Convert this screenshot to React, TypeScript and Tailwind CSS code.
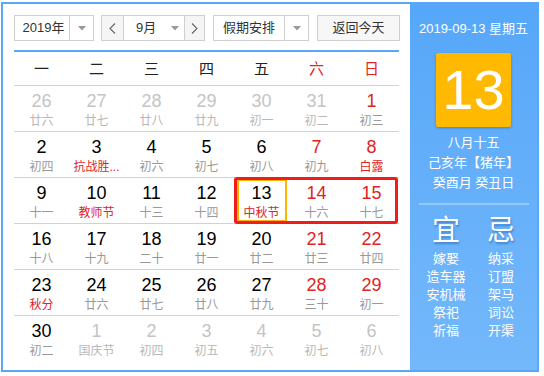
import React from "react";

type Day = { n: number; l: string; other?: boolean; hl?: boolean };

const rows: Day[][] = [
  [
    { n: 26, l: "廿六", other: true },
    { n: 27, l: "廿七", other: true },
    { n: 28, l: "廿八", other: true },
    { n: 29, l: "廿九", other: true },
    { n: 30, l: "初一", other: true },
    { n: 31, l: "初二", other: true },
    { n: 1, l: "初三" },
  ],
  [
    { n: 2, l: "初四" },
    { n: 3, l: "抗战胜...", hl: true },
    { n: 4, l: "初六" },
    { n: 5, l: "初七" },
    { n: 6, l: "初八" },
    { n: 7, l: "初九" },
    { n: 8, l: "白露", hl: true },
  ],
  [
    { n: 9, l: "十一" },
    { n: 10, l: "教师节", hl: true },
    { n: 11, l: "十三" },
    { n: 12, l: "十四" },
    { n: 13, l: "中秋节", hl: true },
    { n: 14, l: "十六" },
    { n: 15, l: "十七" },
  ],
  [
    { n: 16, l: "十八" },
    { n: 17, l: "十九" },
    { n: 18, l: "二十" },
    { n: 19, l: "廿一" },
    { n: 20, l: "廿二" },
    { n: 21, l: "廿三" },
    { n: 22, l: "廿四" },
  ],
  [
    { n: 23, l: "秋分", hl: true },
    { n: 24, l: "廿六" },
    { n: 25, l: "廿七" },
    { n: 26, l: "廿八" },
    { n: 27, l: "廿九" },
    { n: 28, l: "三十" },
    { n: 29, l: "初一" },
  ],
  [
    { n: 30, l: "初二" },
    { n: 1, l: "国庆节", other: true },
    { n: 2, l: "初四", other: true },
    { n: 3, l: "初五", other: true },
    { n: 4, l: "初六", other: true },
    { n: 5, l: "初七", other: true },
    { n: 6, l: "初八", other: true },
  ],
];

const weekdays = ["一", "二", "三", "四", "五", "六", "日"];
const yi = ["嫁娶", "造车器", "安机械", "祭祀", "祈福"];
const ji = ["纳采", "订盟", "架马", "词讼", "开渠"];

function Tri() {
  return (
    <svg width="8" height="5" viewBox="0 0 8 5">
      <path d="M0 0 L8 0 L4 4.5 Z" fill="#999" />
    </svg>
  );
}

function Chevron({ dir }: { dir: "l" | "r" }) {
  return (
    <svg width="7" height="11" viewBox="0 0 7 11">
      <polyline
        points={dir === "l" ? "6,0.5 1,5.5 6,10.5" : "1,0.5 6,5.5 1,10.5"}
        fill="none"
        stroke="#666"
        strokeWidth="1.1"
      />
    </svg>
  );
}

export default function App() {
  return (
    <div className="w-[544px] h-[376px] bg-white pt-[2px] pl-[1px] font-['Liberation_Sans','Noto_Sans_CJK_SC',sans-serif]">
      <div className="w-[538px] h-[370px] border-2 border-[#5aa7f8] flex">
        {/* Left */}
        <div className="w-[407px] pl-[11px] pt-[11px]">
          {/* controls */}
          <div className="flex h-[26px] text-[13px] text-[#333]">
            <div className="w-[80px] h-[26px] border border-[#cfcfcf] flex">
              <div className="w-[55px] flex items-center justify-center pl-[3px] border-r border-[#cfcfcf]">2019年</div>
              <div className="flex-1 flex items-center justify-center">
                <Tri />
              </div>
            </div>
            <div className="ml-[7px] w-[104px] h-[26px] border border-[#cfcfcf] flex">
              <div className="w-[22px] bg-[#f5f5f5] border-r border-[#cfcfcf] flex items-center justify-center">
                <Chevron dir="l" />
              </div>
              <div className="w-[60px] flex items-center pl-[12px]">
                <span>9月</span>
                <span className="ml-[15px] flex">
                  <Tri />
                </span>
              </div>
              <div className="flex-1 bg-[#f5f5f5] border-l border-[#cfcfcf] flex items-center justify-center">
                <Chevron dir="r" />
              </div>
            </div>
            <div className="ml-[8px] w-[96px] h-[26px] border border-[#cfcfcf] flex">
              <div className="w-[71px] flex items-center justify-center border-r border-[#cfcfcf]">假期安排</div>
              <div className="flex-1 flex items-center justify-center">
                <Tri />
              </div>
            </div>
            <div className="ml-[8px] w-[83px] h-[26px] border border-[#cfcfcf] bg-[#f7f7f7] flex items-center justify-center">
              返回今天
            </div>
          </div>
          <div className="mt-[9px] w-[385px] h-[2px] bg-[#5aa7f8]" />
          {/* grid */}
          <div className="w-[385px]">
            <div className="grid grid-cols-7 h-[34px] border-b border-[#d2d2d2] items-center pt-[2px]">
              {weekdays.map((w, i) => (
                <div
                  key={w}
                  className={`text-center text-[15px] ${i >= 5 ? "text-[#e02424]" : "text-[#222]"}`}
                >
                  {w}
                </div>
              ))}
            </div>
            {rows.map((row, ri) => (
              <div
                key={ri}
                className={`relative grid grid-cols-7 h-[46px] ${ri < 5 ? "border-b border-[#d2d2d2]" : ""}`}
              >
                {row.map((d, ci) => {
                  const weekend = ci >= 5;
                  const numColor = d.other
                    ? "text-[#c4c4c4]"
                    : weekend
                    ? "text-[#e02424]"
                    : "text-black";
                  const lunColor = d.other
                    ? "text-[#b8b8b8]"
                    : d.hl
                    ? "text-[#e02424]"
                    : "text-[#999]";
                  const sel = ri === 2 && ci === 4;
                  return (
                    <div key={ci} className="relative flex flex-col items-center pt-[5px]">
                      {sel && (
                        <div className="absolute left-[3px] right-[2px] top-[1px] bottom-[1px] border-2 border-[#ffb400]" />
                      )}
                      <div className={`text-[18px] leading-[20px] ${numColor}`}>{d.n}</div>
                      <div className={`mt-[2px] text-[12px] leading-[16px] whitespace-nowrap ${lunColor}`}>{d.l}</div>
                    </div>
                  );
                })}
                {ri === 2 && (
                  <div className="absolute left-[220px] top-[-1px] w-[164px] h-[47px] border-[3px] border-[#f01c1c] rounded-[3px]" />
                )}
              </div>
            ))}
          </div>
        </div>
        {/* Right */}
        <div className="flex-1 bg-gradient-to-b from-[#56a7f9] to-[#74b8fb] flex flex-col items-center text-white pt-[16px]">
          <div className="text-[13px] leading-[18px] whitespace-nowrap">2019-09-13 星期五</div>
          <div className="mt-[15px] w-[75px] h-[74px] bg-[#ffb900] rounded-[2px] shadow-[0_1px_3px_rgba(0,0,0,0.25)] flex items-center justify-center text-[56px] leading-none">
            13
          </div>
          <div className="mt-[6px] text-[13px] leading-[20px] text-center whitespace-nowrap">
            <div>八月十五</div>
            <div>己亥年【猪年】</div>
            <div>癸酉月 癸丑日</div>
          </div>
          <div className="mt-[10px] w-[110px] h-[2px] bg-[#94c9fc]" />
          <div className="w-[110px] flex mt-[10px]">
            <div className="w-[55px] flex flex-col items-center">
              <div className="text-[28px] leading-[32px] [text-shadow:1px_2px_2px_rgba(0,50,120,0.35)]">宜</div>
              <div className="mt-[3px] text-[13px] leading-[18px] text-center">
                {yi.map((t) => (
                  <div key={t} className="whitespace-nowrap">{t}</div>
                ))}
              </div>
            </div>
            <div className="w-[55px] flex flex-col items-center">
              <div className="text-[28px] leading-[32px] [text-shadow:1px_2px_2px_rgba(0,50,120,0.35)]">忌</div>
              <div className="mt-[3px] text-[13px] leading-[18px] text-center">
                {ji.map((t) => (
                  <div key={t} className="whitespace-nowrap">{t}</div>
                ))}
              </div>
            </div>
          </div>
        </div>
      </div>
    </div>
  );
}
